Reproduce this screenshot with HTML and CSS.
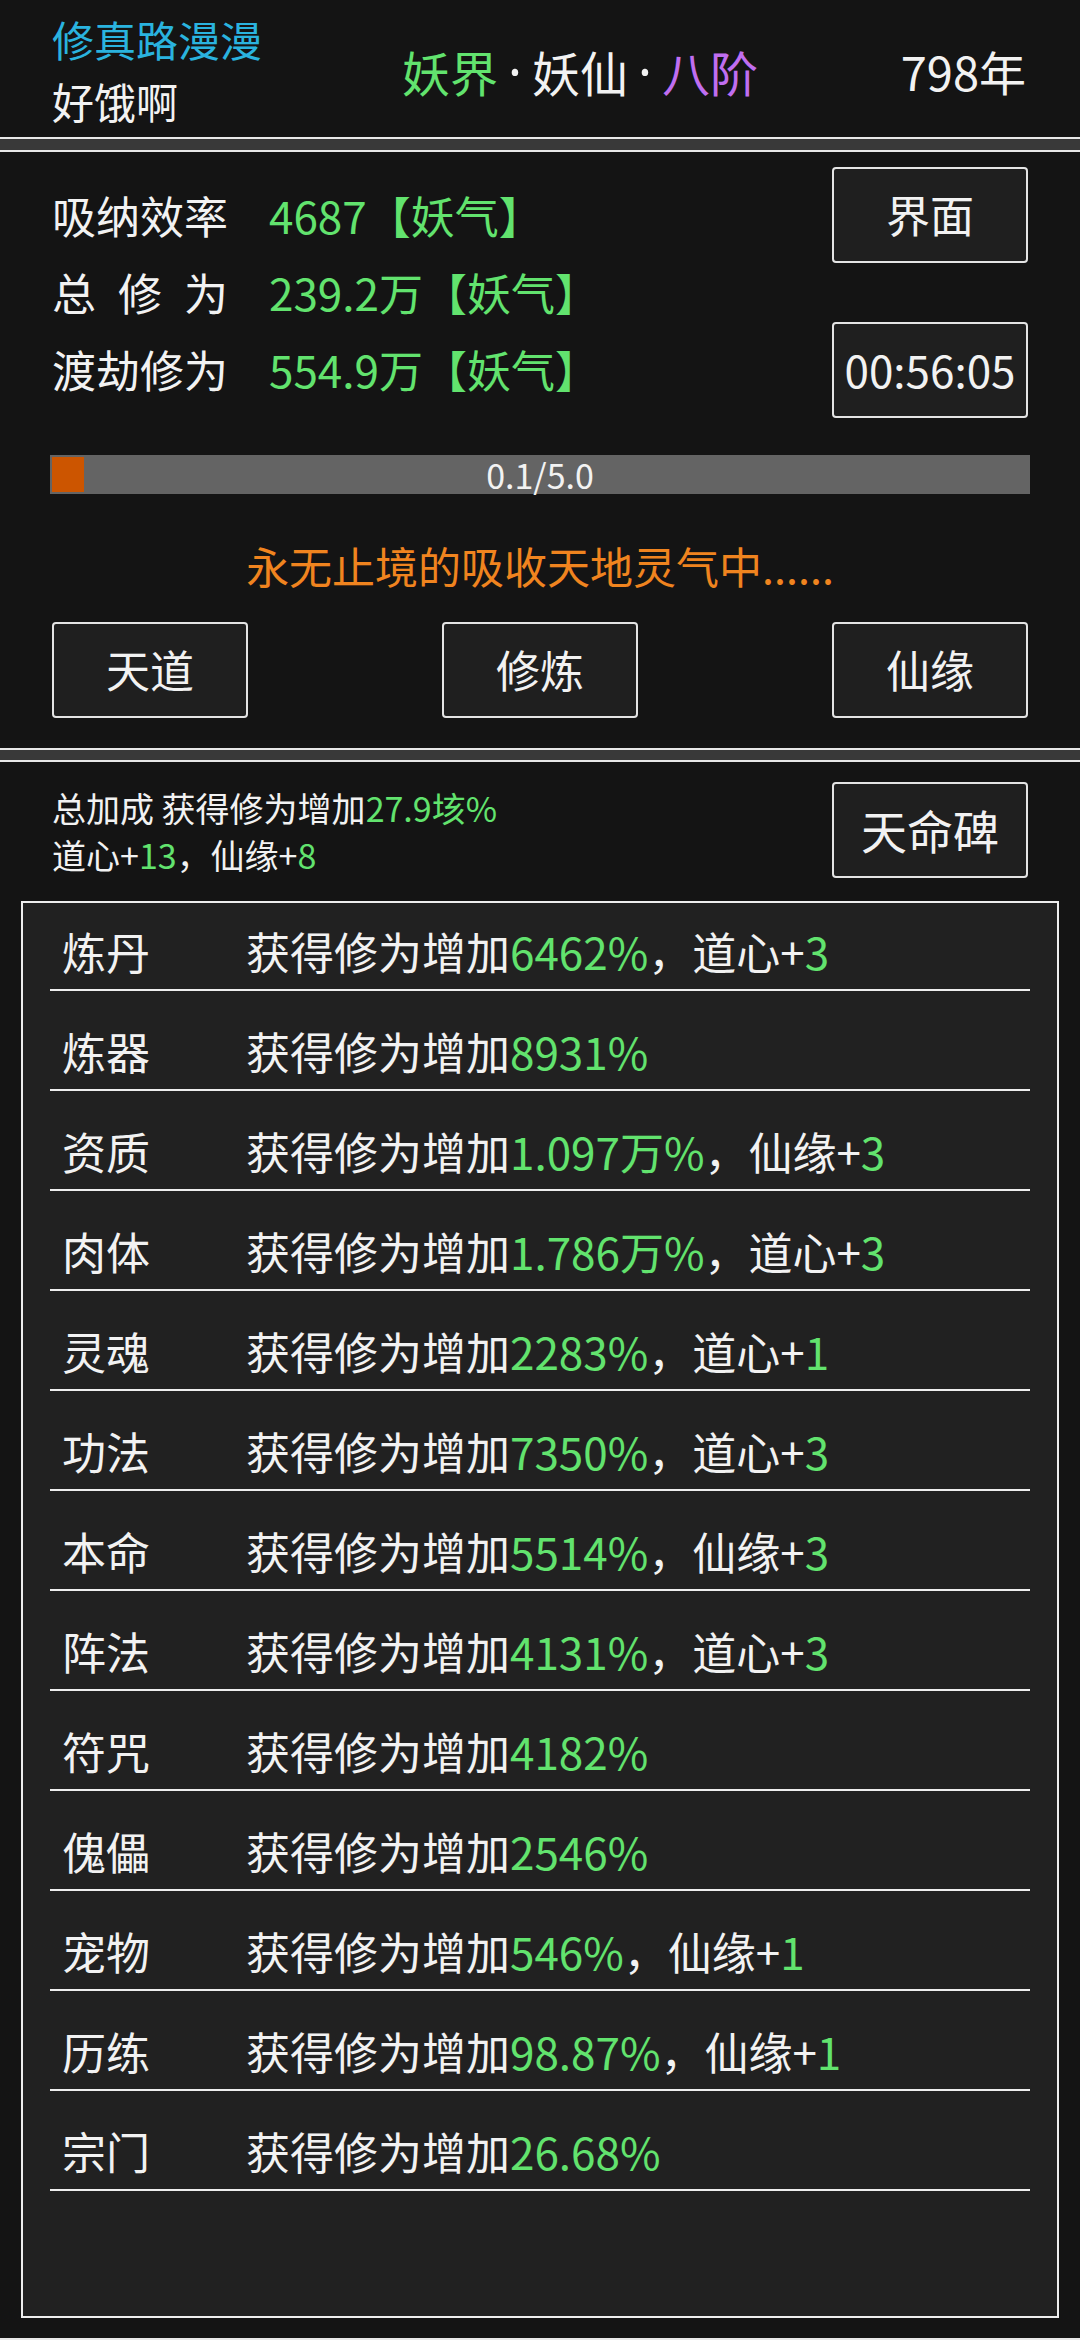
FILE: index.html
```html
<!DOCTYPE html>
<html lang="zh-CN">
<head>
<meta charset="utf-8">
<title>修真路漫漫</title>
<link rel="stylesheet" href="styles.css">
</head>
<body>
<div class="app">
  <header class="topbar">
    <div class="top-left">
      <div class="game-name">修真路漫漫</div>
      <div class="player">好饿啊</div>
    </div>
    <div class="realm"><span class="g">妖界</span><span class="dot">·</span><span>妖仙</span><span class="dot">·</span><span class="p">八阶</span></div>
    <div class="year">798年</div>
  </header>

  <section class="panel panel-main">
    <div class="main-top">
      <div class="stats">
        <div class="stat"><span class="label">吸纳效率</span><span class="val">4687【妖气】</span></div>
        <div class="stat"><span class="label">总修为</span><span class="val">239.2万【妖气】</span></div>
        <div class="stat"><span class="label">渡劫修为</span><span class="val">554.9万【妖气】</span></div>
      </div>
      <div class="side-btns">
        <div class="btn">界面</div>
        <div class="btn">00:56:05</div>
      </div>
    </div>
    <div class="progress">
      <div class="fill"></div>
      <div class="ptext">0.1/5.0</div>
    </div>
    <div class="status">永无止境的吸收天地灵气中......</div>
    <div class="btn-row">
      <div class="btn">天道</div>
      <div class="btn">修炼</div>
      <div class="btn">仙缘</div>
    </div>
  </section>

  <section class="panel panel-bonus">
    <div class="bonus-top">
      <div class="summary">
        <div>总加成 获得修为增加<span class="g">27.9垓%</span></div>
        <div>道心+<span class="g">13</span>，仙缘+<span class="g">8</span></div>
      </div>
      <div class="btn btn-wide">天命碑</div>
    </div>
    <div class="list">
      <div class="row"><span class="name">炼丹</span><span class="desc">获得修为增加<span class="g">6462%</span>，道心+<span class="g">3</span></span></div>
      <div class="row"><span class="name">炼器</span><span class="desc">获得修为增加<span class="g">8931%</span></span></div>
      <div class="row"><span class="name">资质</span><span class="desc">获得修为增加<span class="g">1.097万%</span>，仙缘+<span class="g">3</span></span></div>
      <div class="row"><span class="name">肉体</span><span class="desc">获得修为增加<span class="g">1.786万%</span>，道心+<span class="g">3</span></span></div>
      <div class="row"><span class="name">灵魂</span><span class="desc">获得修为增加<span class="g">2283%</span>，道心+<span class="g">1</span></span></div>
      <div class="row"><span class="name">功法</span><span class="desc">获得修为增加<span class="g">7350%</span>，道心+<span class="g">3</span></span></div>
      <div class="row"><span class="name">本命</span><span class="desc">获得修为增加<span class="g">5514%</span>，仙缘+<span class="g">3</span></span></div>
      <div class="row"><span class="name">阵法</span><span class="desc">获得修为增加<span class="g">4131%</span>，道心+<span class="g">3</span></span></div>
      <div class="row"><span class="name">符咒</span><span class="desc">获得修为增加<span class="g">4182%</span></span></div>
      <div class="row"><span class="name">傀儡</span><span class="desc">获得修为增加<span class="g">2546%</span></span></div>
      <div class="row"><span class="name">宠物</span><span class="desc">获得修为增加<span class="g">546%</span>，仙缘+<span class="g">1</span></span></div>
      <div class="row"><span class="name">历练</span><span class="desc">获得修为增加<span class="g">98.87%</span>，仙缘+<span class="g">1</span></span></div>
      <div class="row"><span class="name">宗门</span><span class="desc">获得修为增加<span class="g">26.68%</span></span></div>
    </div>
  </section>
</div>
</body>
</html>
```

FILE: styles.css
```css
* { box-sizing: border-box; }
html, body { margin: 0; padding: 0; }
body {
  width: 1080px;
  height: 2340px;
  background: #393939;
  font-family: "Noto Sans CJK SC", "Noto Sans", sans-serif;
  color: #f2f2f2;
  overflow: hidden;
}
.app {
  height: 2340px;
  display: flex;
  flex-direction: column;
}
.g { color: #62e36e; }
.p { color: #c06ef0; }

/* header */
.topbar {
  height: 139px;
  flex: 0 0 139px;
  background: #141414;
  border-bottom: 2px solid #e8e8e8;
  display: flex;
  align-items: center;
  padding: 0 54px 0 52px;
}
.top-left {
  width: 350px;
  align-self: flex-start;
  padding-top: 8px;
  font-size: 42px;
  line-height: 62px;
}
.game-name { color: #2ab3df; }
.player { color: #f2f2f2; }
.realm {
  font-size: 48px;
  line-height: 56px;
  padding-top: 4px;
  white-space: nowrap;
  display: flex;
  align-items: center;
}
.dot {
  font-family: "Noto Sans", sans-serif;
  font-size: 52px;
  line-height: 56px;
  padding: 0 10px;
  color: #f2f2f2;
}
.year {
  margin-left: auto;
  font-size: 47px;
  line-height: 1;
  padding-top: 4px;
}

/* panels */
.panel {
  background: #141414;
  border-top: 2px solid #e8e8e8;
  border-bottom: 2px solid #e8e8e8;
}
.panel-main { margin-top: 11px; flex: 0 0 600px; }
.panel-bonus {
  margin-top: 10px;
  flex: 1;
  display: flex;
  flex-direction: column;
}

.main-top {
  display: flex;
  justify-content: space-between;
  padding: 15px 52px 0;
}
.stats { padding-top: 10px; }
.stat {
  display: flex;
  font-size: 44px;
  line-height: 77px;
  white-space: nowrap;
}
.label {
  width: 176px;
  text-align: justify;
  text-align-last: justify;
  margin-right: 41px;
}
.val { color: #62e36e; }
.side-btns {
  display: flex;
  flex-direction: column;
  gap: 59px;
}
.btn {
  width: 196px;
  height: 96px;
  border: 2px solid #e4e4e4;
  border-radius: 4px;
  background: #1f1f1f;
  color: #f2f2f2;
  font-size: 44px;
  display: flex;
  align-items: center;
  justify-content: center;
  white-space: nowrap;
  padding-bottom: 3px;
}
.btn-wide { font-size: 46px; }

.progress {
  margin: 37px 50px 0;
  height: 39px;
  background: #646464;
  display: grid;
  padding: 2px;
}
.fill {
  grid-area: 1 / 1;
  width: 32px;
  background: #cc5500;
}
.ptext {
  grid-area: 1 / 1;
  text-align: center;
  font-size: 34px;
  line-height: 35px;
  color: #f2f2f2;
}
.status {
  margin-top: 41px;
  text-align: center;
  font-size: 43px;
  line-height: 60px;
  color: #f0841f;
}
.btn-row {
  margin-top: 27px;
  padding: 0 52px 30px;
  display: flex;
  justify-content: space-between;
}

/* bonus panel */
.bonus-top {
  display: flex;
  justify-content: space-between;
  padding: 20px 52px 0;
}
.summary {
  padding-top: 2px;
  font-size: 34px;
  line-height: 47px;
}
.list {
  flex: 1;
  margin: 23px 21px 20px;
  border: 2px solid #eeeeee;
  background: #212121;
  padding: 0 27px;
}
.row {
  height: 100px;
  border-bottom: 2px solid #eeeeee;
  display: flex;
  align-items: flex-end;
  padding: 0 0 8px 12px;
  font-size: 44px;
  line-height: 60px;
  white-space: nowrap;
}
.row:first-child { height: 88px; }
.name { flex: 0 0 184px; }
```
